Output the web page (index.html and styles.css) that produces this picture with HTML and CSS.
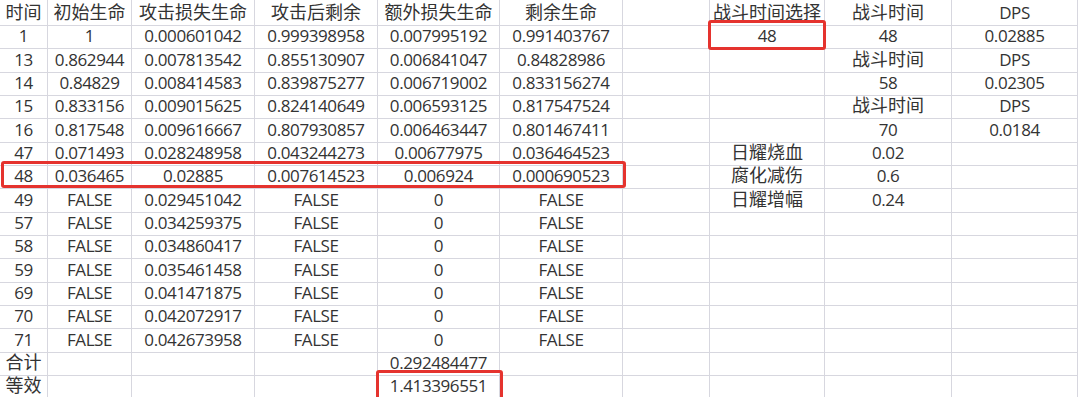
FILE: index.html
```html
<!DOCTYPE html>
<html lang="zh-CN">
<head>
<meta charset="utf-8">
<title>战斗时间 DPS</title>
<link rel="stylesheet" href="styles.css">
</head>
<body>
<div class="sheet">
  <div class="row"><div class="c zh">时间</div><div class="c zh">初始生命</div><div class="c zh">攻击损失生命</div><div class="c zh">攻击后剩余</div><div class="c zh">额外损失生命</div><div class="c zh">剩余生命</div><div class="c"></div><div class="c zh">战斗时间选择</div><div class="c zh">战斗时间</div><div class="c">DPS</div></div>
  <div class="row"><div class="c">1</div><div class="c">1</div><div class="c">0.000601042</div><div class="c">0.999398958</div><div class="c">0.007995192</div><div class="c">0.991403767</div><div class="c"></div><div class="c sel">48</div><div class="c">48</div><div class="c">0.02885</div></div>
  <div class="row"><div class="c">13</div><div class="c">0.862944</div><div class="c">0.007813542</div><div class="c">0.855130907</div><div class="c">0.006841047</div><div class="c">0.84828986</div><div class="c"></div><div class="c"></div><div class="c zh">战斗时间</div><div class="c">DPS</div></div>
  <div class="row"><div class="c">14</div><div class="c">0.84829</div><div class="c">0.008414583</div><div class="c">0.839875277</div><div class="c">0.006719002</div><div class="c">0.833156274</div><div class="c"></div><div class="c"></div><div class="c">58</div><div class="c">0.02305</div></div>
  <div class="row"><div class="c">15</div><div class="c">0.833156</div><div class="c">0.009015625</div><div class="c">0.824140649</div><div class="c">0.006593125</div><div class="c">0.817547524</div><div class="c"></div><div class="c"></div><div class="c zh">战斗时间</div><div class="c">DPS</div></div>
  <div class="row"><div class="c">16</div><div class="c">0.817548</div><div class="c">0.009616667</div><div class="c">0.807930857</div><div class="c">0.006463447</div><div class="c">0.801467411</div><div class="c"></div><div class="c"></div><div class="c">70</div><div class="c">0.0184</div></div>
  <div class="row"><div class="c">47</div><div class="c">0.071493</div><div class="c">0.028248958</div><div class="c">0.043244273</div><div class="c">0.00677975</div><div class="c">0.036464523</div><div class="c"></div><div class="c zh">日耀烧血</div><div class="c">0.02</div><div class="c"></div></div>
  <div class="row marked"><div class="mark"></div><div class="c">48</div><div class="c">0.036465</div><div class="c">0.02885</div><div class="c">0.007614523</div><div class="c">0.006924</div><div class="c">0.000690523</div><div class="c"></div><div class="c zh">腐化减伤</div><div class="c">0.6</div><div class="c"></div></div>
  <div class="row"><div class="c">49</div><div class="c">FALSE</div><div class="c">0.029451042</div><div class="c">FALSE</div><div class="c">0</div><div class="c">FALSE</div><div class="c"></div><div class="c zh">日耀增幅</div><div class="c">0.24</div><div class="c"></div></div>
  <div class="row"><div class="c">57</div><div class="c">FALSE</div><div class="c">0.034259375</div><div class="c">FALSE</div><div class="c">0</div><div class="c">FALSE</div><div class="c"></div><div class="c"></div><div class="c"></div><div class="c"></div></div>
  <div class="row"><div class="c">58</div><div class="c">FALSE</div><div class="c">0.034860417</div><div class="c">FALSE</div><div class="c">0</div><div class="c">FALSE</div><div class="c"></div><div class="c"></div><div class="c"></div><div class="c"></div></div>
  <div class="row"><div class="c">59</div><div class="c">FALSE</div><div class="c">0.035461458</div><div class="c">FALSE</div><div class="c">0</div><div class="c">FALSE</div><div class="c"></div><div class="c"></div><div class="c"></div><div class="c"></div></div>
  <div class="row"><div class="c">69</div><div class="c">FALSE</div><div class="c">0.041471875</div><div class="c">FALSE</div><div class="c">0</div><div class="c">FALSE</div><div class="c"></div><div class="c"></div><div class="c"></div><div class="c"></div></div>
  <div class="row"><div class="c">70</div><div class="c">FALSE</div><div class="c">0.042072917</div><div class="c">FALSE</div><div class="c">0</div><div class="c">FALSE</div><div class="c"></div><div class="c"></div><div class="c"></div><div class="c"></div></div>
  <div class="row"><div class="c">71</div><div class="c">FALSE</div><div class="c">0.042673958</div><div class="c">FALSE</div><div class="c">0</div><div class="c">FALSE</div><div class="c"></div><div class="c"></div><div class="c"></div><div class="c"></div></div>
  <div class="row"><div class="c zh">合计</div><div class="c"></div><div class="c"></div><div class="c"></div><div class="c">0.292484477</div><div class="c"></div><div class="c"></div><div class="c"></div><div class="c"></div><div class="c"></div></div>
  <div class="row"><div class="c zh">等效</div><div class="c"></div><div class="c"></div><div class="c"></div><div class="c sel wide">1.413396551</div><div class="c"></div><div class="c"></div><div class="c"></div><div class="c"></div><div class="c"></div></div>
</div>
</body>
</html>
```

FILE: styles.css
```css
html, body {
  margin: 0;
  padding: 0;
  background: #ffffff;
}

body {
  font-family: "Open Sans", "Noto Sans CJK SC", sans-serif;
  font-size: 17px;
  letter-spacing: -0.4px;
  color: #333333;
  overflow: hidden;
}

.sheet {
  display: flex;
  flex-direction: column;
  width: 1080px;
}

.row {
  display: grid;
  grid-template-columns: 48px 84px 123px 123px 122px 123px 87px 115px 127px 126px;
  height: 23.33px;
}

.c {
  box-sizing: border-box;
  border-right: 1px solid #d7d7df;
  border-bottom: 1px solid #d7d7df;
  text-align: center;
  line-height: 25px;
  white-space: nowrap;
}

.zh {
  font-family: "Noto Sans CJK SC", sans-serif;
  font-size: 18px;
  letter-spacing: 0;
  line-height: 23px;
}

.marked {
  position: relative;
}

.mark {
  position: absolute;
  left: 1px;
  top: -2px;
  width: 625px;
  height: 27px;
  box-sizing: border-box;
  border: 3px solid #e5332e;
  border-radius: 3px;
  z-index: 2;
}

.sel {
  position: relative;
}

.sel::after {
  content: "";
  position: absolute;
  left: -2px;
  right: -2px;
  top: -3px;
  bottom: -2px;
  border: 3px solid #e5332e;
  border-radius: 3px;
  z-index: 2;
}

.wide::after {
  left: -2px;
  right: -4px;
  bottom: -3px;
}
```
